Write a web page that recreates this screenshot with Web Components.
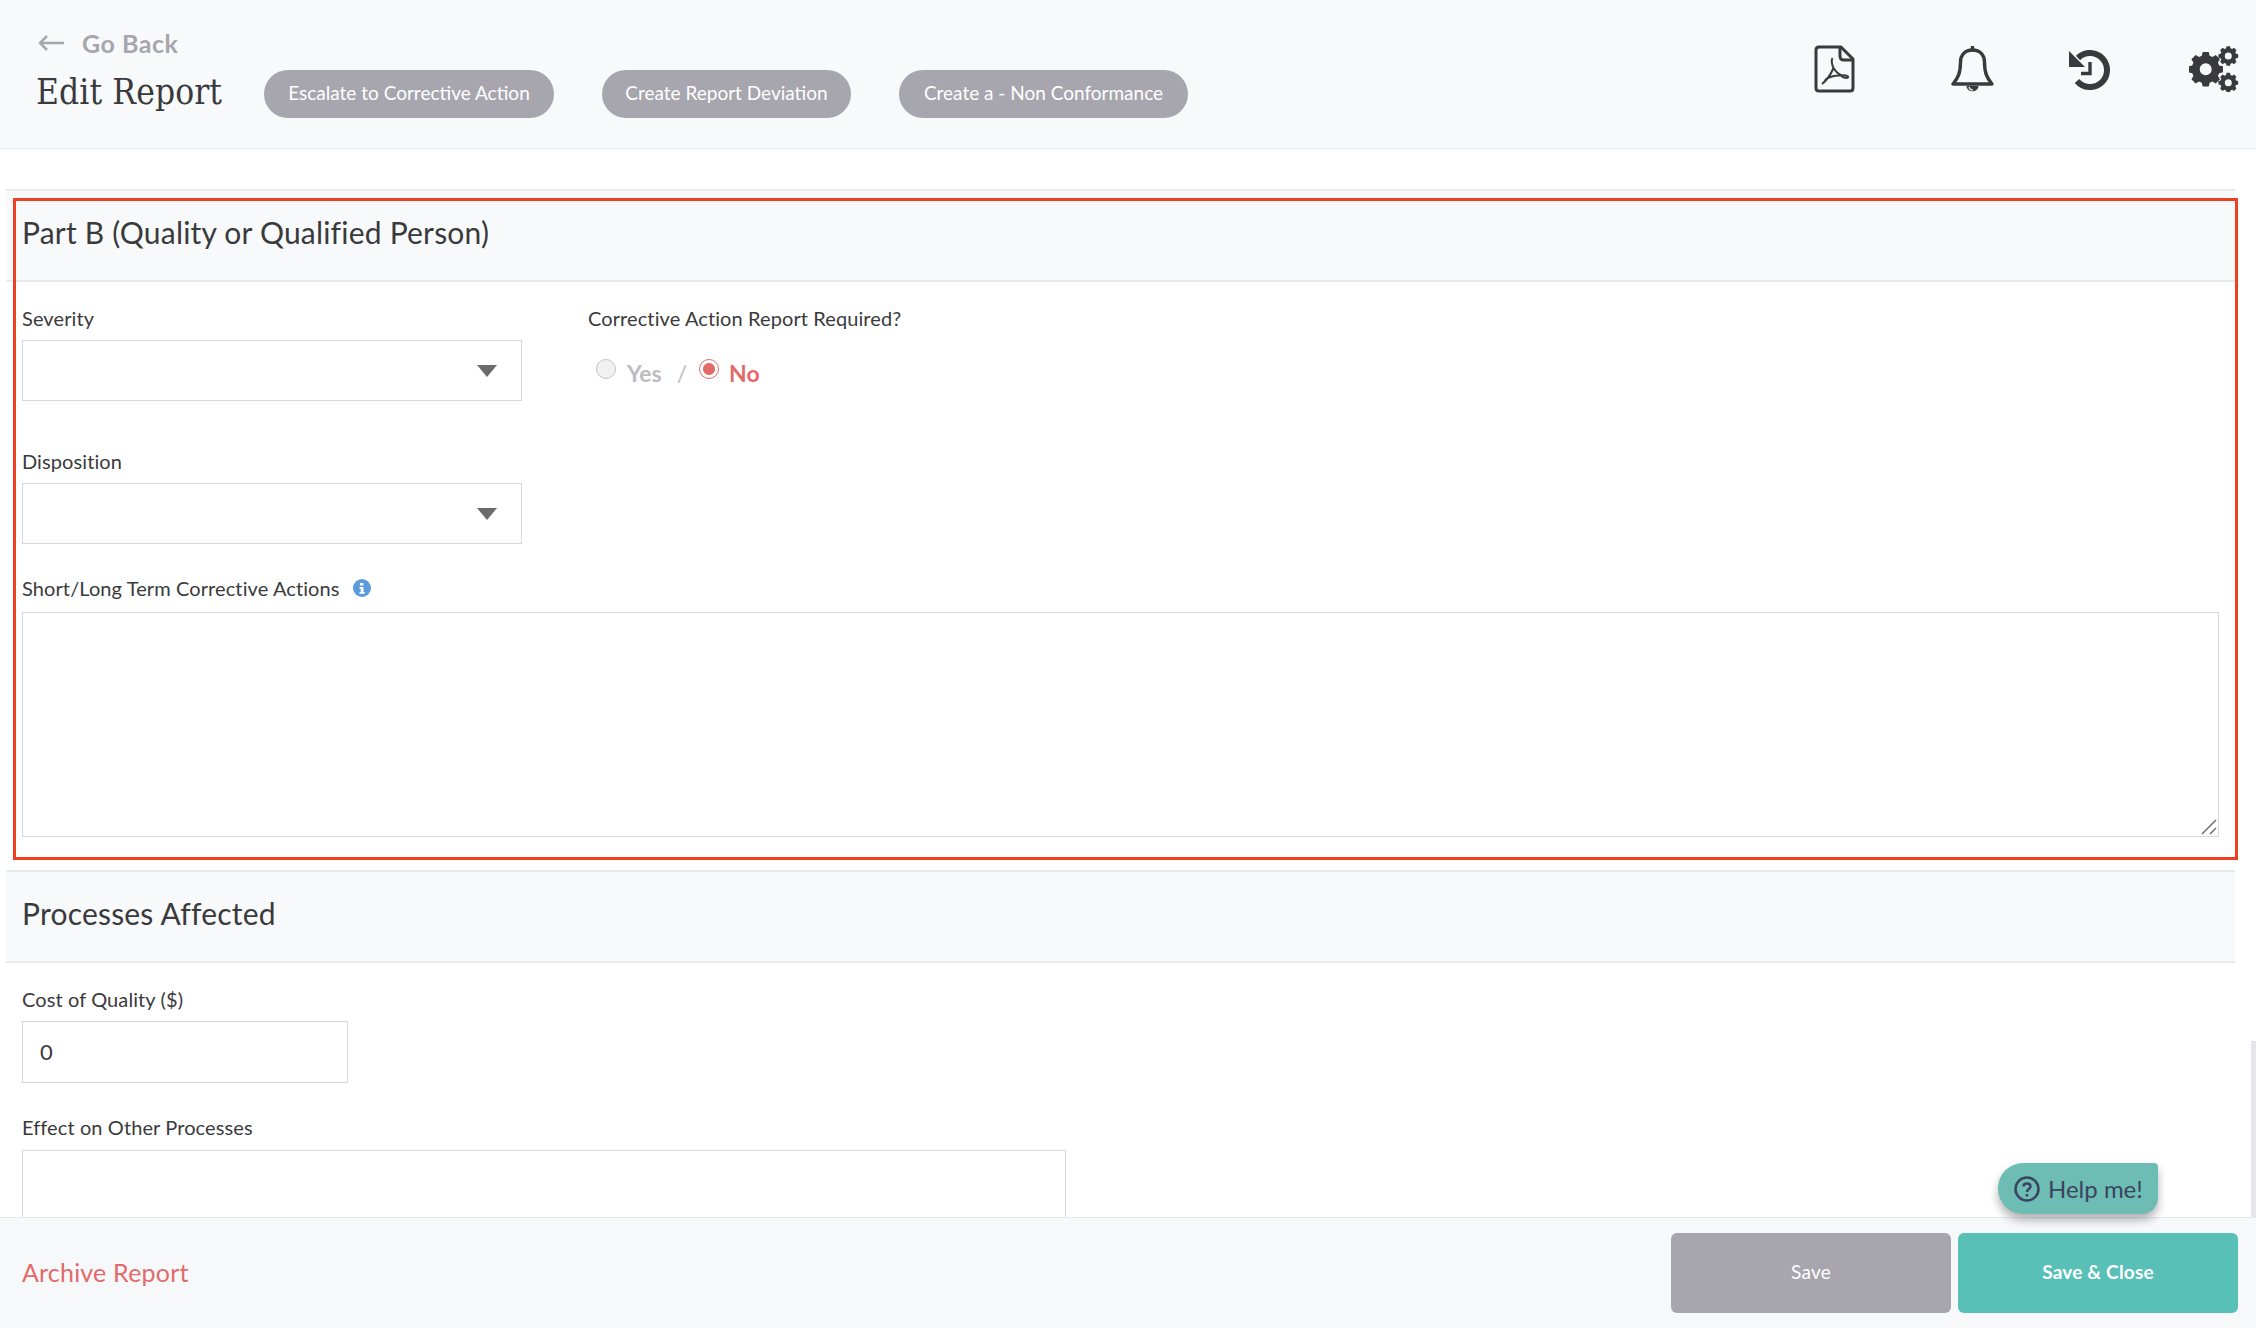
<!DOCTYPE html>
<html>
<head>
<meta charset="utf-8">
<title>Edit Report</title>
<style>
    html, body { margin: 0; height: 100%; }
    body {
        font-family: Lato, "Liberation Sans", sans-serif;
        color: #3a3a3c;
        background: #fff;
        overflow: hidden;
    }
    #app { position: relative; display: flex; flex-direction: column; height: 1328px; }
</style>
</head>
<body>
<div id="app">
    <report-header>
        <pill-button style="width:290px">Escalate to Corrective Action</pill-button>
        <pill-button style="width:249px">Create Report Deviation</pill-button>
        <pill-button style="width:289px">Create a - Non Conformance</pill-button>
        <header-icon slot="icons" name="pdf"></header-icon>
        <header-icon slot="icons" name="bell" style="margin-left:96px"></header-icon>
        <header-icon slot="icons" name="history" style="margin-left:75px"></header-icon>
        <header-icon slot="icons" name="cogs" style="margin-left:79px"></header-icon>
    </report-header>
    <scroll-area>
        <form-section title="Part B (Quality or Qualified Person)">
            <div style="display:flex; gap:66px; margin-top:25px">
                <form-field label="Severity" style="width:500px"><select-box></select-box></form-field>
                <form-field label="Corrective Action Report Required?"><radio-pair></radio-pair></form-field>
            </div>
            <form-field label="Disposition" style="width:500px; margin-top:49px"><select-box></select-box></form-field>
            <form-field label="Short/Long Term Corrective Actions" info style="margin-top:33px">
                <text-box resizable style="height:223px; margin-top:11px"></text-box>
            </form-field>
        </form-section>
        <form-section title="Processes Affected" style="margin-top:33px">
            <form-field label="Cost of Quality ($)" style="width:326px; margin-top:25px"><text-box value="0" style="height:58px; padding-bottom:2px"></text-box></form-field>
            <form-field label="Effect on Other Processes" style="width:1044px; margin-top:33px"><text-box style="height:120px; margin-top:10px"></text-box></form-field>
        </form-section>
    </scroll-area>
    <report-footer>
        <action-button>Save</action-button>
        <action-button primary>Save &amp; Close</action-button>
    </report-footer>
    <help-tab>Help me!</help-tab>
    <red-mark></red-mark>
</div>

<script>
// gear outline with a round hole, used for the three cogs of the settings icon
function cogPath(cx, cy, outer, inner, hole, teeth) {
    const step = Math.PI * 2 / teeth;
    let d = '';
    for (let i = 0; i < teeth; i++) {
        const a = i * step - Math.PI / 2;
        const pts = [
            [inner, a - step * .36],
            [outer, a - step * .22],
            [outer, a + step * .22],
            [inner, a + step * .36]
        ];
        pts.forEach(([r, t], n) => {
            d += `${i === 0 && n === 0 ? 'M' : 'L'}${(cx + r * Math.cos(t)).toFixed(2)} ${(cy + r * Math.sin(t)).toFixed(2)}`;
        });
    }
    d += `Z M${cx - hole} ${cy}a${hole} ${hole} 0 1 0 ${hole * 2} 0a${hole} ${hole} 0 1 0 ${-hole * 2} 0Z`;
    return d;
}

const ICONS = {
    pdf: `<svg width="41" height="48" viewBox="0 0 41 48" fill="none" stroke="#3a3a3c">
        <path d="M27 2H5Q2 2 2 5V43Q2 46 5 46H36Q39 46 39 43V14Z" stroke-width="3" stroke-linejoin="round"/>
        <path d="M26 2V11Q26 15 30 15H39" stroke-width="3"/>
        <path d="M18.500 13C17 15 18 20 19.500 23C17 29 13 35 8 39M19.500 23C22 27 25 29.500 28 30.500C31 30 35 31 34 32.500C32 34 28 32 27 30.500C21 30 14 32 11 35" stroke-width="2"/>
    </svg>`,
    bell: `<svg width="43" height="47" viewBox="0 0 43 47" fill="none" stroke="#3a3a3c" stroke-width="3.400">
        <path d="M21.500 4C14 4 9.500 9 9.500 16C9.500 27 7 32 2 38H41C36 32 33.500 27 33.500 16C33.500 9 29 4 21.500 4Z" stroke-linejoin="round"/>
        <path d="M21.500 1V4" stroke-linecap="round"/>
        <path d="M15.500 40C16 47 27 47 27.500 40Z" fill="#3a3a3c" stroke="none"/>
        <path d="M18 41C18.500 43 20 44 22 44" stroke="#f8f9fb" stroke-width="1.200"/>
    </svg>`,
    history: `<svg width="41" height="41" viewBox="0 0 41 41" fill="none" stroke="#3a3a3c">
        <path d="M9 9A17 17 0 1 1 8 32" stroke-width="6"/>
        <path d="M0 2L0 18H16Z" fill="#3a3a3c" stroke="none"/>
        <path d="M21 13V24.500H12" stroke-width="3.400"/>
    </svg>`,
    cogs: `<svg width="50" height="46" viewBox="0 0 50 46" fill="#3a3a3c">
        <path fill-rule="evenodd" d="${cogPath(16.7, 23.3, 17.5, 14, 6, 8)}"/>
        <path fill-rule="evenodd" d="${cogPath(39.3, 10, 10, 8, 3.5, 8)}"/>
        <path fill-rule="evenodd" d="${cogPath(39.3, 36.7, 10, 8, 3.5, 8)}"/>
    </svg>`
};

class ReportHeader extends HTMLElement {
    constructor() {
        super();
        this.attachShadow({ mode: 'open' });
        this.shadowRoot.innerHTML = `
            <style>
                :host {
                    display: flex;
                    justify-content: space-between;
                    box-sizing: border-box;
                    height: 149px;
                    flex: none;
                    background: #f8f9fb;
                    border-bottom: 1px solid #e9eaed;
                    padding: 30px 17px 0 36px;
                }
                .back {
                    display: flex;
                    align-items: center;
                    gap: 18px;
                    height: 26px;
                    padding-left: 2px;
                    font-size: 25px;
                    letter-spacing: .5px;
                    font-weight: 700;
                    color: #a7a6ae;
                }
                h1 {
                    width: 188px;
                    margin: -4px 0 0;
                    font: 400 35px/44px "DejaVu Serif Condensed", "DejaVu Serif", serif;
                    letter-spacing: .1px;
                    color: #3a3a3c;
                    white-space: nowrap;
                }
                .title-row { display: flex; align-items: center; gap: 40px; margin-top: 14px; }
                .pills { display: flex; gap: 48px; }
                .icons { display: flex; align-items: center; height: 78px; }
            </style>
            <div>
                <div class="back">
                    <svg width="26" height="16" viewBox="0 0 26 16" fill="none" stroke="#a7a6ae" stroke-width="2.500"><path d="M26 8H2M9 1L2 8L9 15"/></svg>
                    Go Back
                </div>
                <div class="title-row">
                    <h1>Edit Report</h1>
                    <div class="pills"><slot></slot></div>
                </div>
            </div>
            <div class="icons"><slot name="icons"></slot></div>
        `;
    }
}

class PillButton extends HTMLElement {
    constructor() {
        super();
        this.attachShadow({ mode: 'open' });
        this.shadowRoot.innerHTML = `
            <style>
                :host {
                    display: flex;
                    align-items: center;
                    justify-content: center;
                    box-sizing: border-box;
                    height: 48px;
                    padding-bottom: 4px;
                    border-radius: 24px;
                    background: #a7a6ae;
                    color: #fff;
                    font-size: 19px;
                    white-space: nowrap;
                }
            </style>
            <slot></slot>
        `;
    }
}

class HeaderIcon extends HTMLElement {
    constructor() {
        super();
        this.attachShadow({ mode: 'open' });
        this.shadowRoot.innerHTML = `
            <style>:host { display: flex; align-items: center; }</style>
            ${ICONS[this.getAttribute('name')] || ''}
        `;
    }
}

class ScrollArea extends HTMLElement {
    constructor() {
        super();
        this.attachShadow({ mode: 'open' });
        this.shadowRoot.innerHTML = `
            <style>
                :host {
                    display: block;
                    position: relative;
                    flex: 1;
                    min-height: 0;
                    overflow: hidden;
                    padding: 40px 21px 0 6px;
                }
                .thumb {
                    position: absolute;
                    right: 0;
                    bottom: 0;
                    width: 5px;
                    height: 176px;
                    background: #e6e6ea;
                }
            </style>
            <slot></slot>
            <div class="thumb"></div>
        `;
    }
}

class FormSection extends HTMLElement {
    constructor() {
        super();
        this.attachShadow({ mode: 'open' });
        this.shadowRoot.innerHTML = `
            <style>
                :host { display: block; }
                h2 {
                    margin: 0;
                    height: 82px;
                    padding: 0 0 7px 16px;
                    display: flex;
                    align-items: center;
                    background: #f8f9fb;
                    border: solid #e9eaed;
                    border-width: 2px 0;
                    font-size: 30px;
                    letter-spacing: .2px;
                    font-weight: 400;
                    color: #3a3a3c;
                }
                .body { padding: 0 16px; }
            </style>
            <h2>${this.getAttribute('title') || ''}</h2>
            <div class="body"><slot></slot></div>
        `;
        this.removeAttribute('title');
    }
}

class FormField extends HTMLElement {
    constructor() {
        super();
        this.attachShadow({ mode: 'open' });
        const info = this.hasAttribute('info') ? `
            <svg width="18" height="18" viewBox="0 0 18 18"><circle cx="9" cy="9" r="9" fill="#5b9bdc"/><path d="M7 4h3.500v2.500H7zM6.500 8h4v5h1.200v1.800H6.500V13h1.200V9.800H6.500z" fill="#fff"/></svg>` : '';
        this.shadowRoot.innerHTML = `
            <style>
                :host { display: block; }
                label {
                    display: flex;
                    align-items: center;
                    gap: 13px;
                    box-sizing: border-box;
                    height: 24px;
                    padding-bottom: 3px;
                    margin-bottom: 9px;
                    font-size: 20px;
                    letter-spacing: .1px;
                    color: #3a3a3c;
                }
            </style>
            <label>${this.getAttribute('label') || ''}${info}</label>
            <slot></slot>
        `;
    }
}

class SelectBox extends HTMLElement {
    constructor() {
        super();
        this.attachShadow({ mode: 'open' });
        this.shadowRoot.innerHTML = `
            <style>
                :host {
                    display: flex;
                    align-items: center;
                    justify-content: flex-end;
                    box-sizing: border-box;
                    height: 61px;
                    padding-right: 24px;
                    border: 1px solid #d8d8d8;
                    background: #fff;
                }
                i {
                    border: solid transparent;
                    border-width: 12px 10.500px 0;
                    border-top-color: #6b6b6b;
                }
            </style>
            <i></i>
        `;
    }
}

class RadioPair extends HTMLElement {
    constructor() {
        super();
        this.attachShadow({ mode: 'open' });
        this.shadowRoot.innerHTML = `
            <style>
                :host {
                    display: flex;
                    align-items: center;
                    box-sizing: border-box;
                    height: 61px;
                    padding: 5px 0 0 8px;
                    font-size: 23px;
                    font-weight: 700;
                    color: #bdbdc1;
                }
                .dot {
                    box-sizing: border-box;
                    width: 20px;
                    height: 20px;
                    margin-top: -8px;
                    border-radius: 50%;
                    border: 1px solid #c4c4c4;
                    background: #f1f1f1;
                }
                .on {
                    border-color: #e26a6a;
                    background: radial-gradient(circle, #e26a6a 0 5.500px, #fff 6.500px);
                }
                .sep { margin: 0 12px 0 15px; font-weight: 400; }
                .no { color: #e26a6a; margin-left: 10px; }
                .yes { margin-left: 11px; }
            </style>
            <span class="dot"></span><span class="yes">Yes</span>
            <span class="sep">/</span>
            <span class="dot on"></span><span class="no">No</span>
        `;
    }
}

class TextBox extends HTMLElement {
    constructor() {
        super();
        this.attachShadow({ mode: 'open' });
        const grip = this.hasAttribute('resizable') ? `
            <svg class="grip" width="16" height="16" viewBox="0 0 16 16" stroke="#6f6f6f" stroke-width="1.500"><path d="M1 15L15 1M9 15L15 9"/></svg>` : '';
        this.shadowRoot.innerHTML = `
            <style>
                :host {
                    display: flex;
                    align-items: center;
                    position: relative;
                    box-sizing: content-box;
                    padding-left: 17px;
                    border: 1px solid #d8d8d8;
                    background: #fff;
                    font-size: 22px;
                    color: #3a3a3c;
                }
                .grip { position: absolute; right: 1px; bottom: 1px; }
            </style>
            ${this.getAttribute('value') || ''}${grip}
        `;
    }
}

class ReportFooter extends HTMLElement {
    constructor() {
        super();
        this.attachShadow({ mode: 'open' });
        this.shadowRoot.innerHTML = `
            <style>
                :host {
                    display: flex;
                    align-items: center;
                    justify-content: space-between;
                    position: relative;
                    box-sizing: border-box;
                    height: 111px;
                    flex: none;
                    padding: 0 18px 0 22px;
                    background: #f7f8fa;
                    border-top: 1px solid #e6e7ea;
                }
                .archive { font-size: 25px; letter-spacing: .2px; color: #e26a6a; margin-top: -2px; }
                .buttons { display: flex; gap: 7px; }
            </style>
            <span class="archive">Archive Report</span>
            <div class="buttons"><slot></slot></div>
        `;
    }
}

class ActionButton extends HTMLElement {
    constructor() {
        super();
        this.attachShadow({ mode: 'open' });
        const primary = this.hasAttribute('primary');
        this.shadowRoot.innerHTML = `
            <style>
                :host {
                    display: flex;
                    align-items: center;
                    justify-content: center;
                    box-sizing: border-box;
                    width: 280px;
                    height: 80px;
                    padding-bottom: 4px;
                    border-radius: 6px;
                    background: ${primary ? '#58c0b7' : '#a7a6ae'};
                    color: #fff;
                    font-size: 19px;
                    letter-spacing: .2px;
                    font-weight: ${primary ? 700 : 400};
                }
            </style>
            <slot></slot>
        `;
    }
}

class HelpTab extends HTMLElement {
    constructor() {
        super();
        this.attachShadow({ mode: 'open' });
        this.shadowRoot.innerHTML = `
            <style>
                :host {
                    position: absolute;
                    left: 1998px;
                    top: 1163px;
                    display: flex;
                    align-items: center;
                    gap: 8px;
                    box-sizing: border-box;
                    width: 160px;
                    height: 51px;
                    padding-left: 16px;
                    border-radius: 25px 4px 16px 25px;
                    background: #6dbdb4;
                    color: #3a4460;
                    font-size: 24px;
                    box-shadow: 0 6px 10px rgba(0, 0, 0, .3);
                }
            </style>
            <svg width="26" height="26" viewBox="0 0 26 26" fill="none" stroke="#3a4460" stroke-width="2.500">
                <circle cx="13" cy="13" r="11.500"/>
                <path d="M9.500 10.500C9.500 6.500 16.500 6.500 16.500 10.500C16.500 13 13 13 13 16"/>
                <path d="M13 18V20.500"/>
            </svg>
            <slot></slot>
        `;
    }
}

class RedMark extends HTMLElement {
    constructor() {
        super();
        this.attachShadow({ mode: 'open' });
        this.shadowRoot.innerHTML = `
            <style>
                :host {
                    position: absolute;
                    left: 13px;
                    top: 198px;
                    box-sizing: border-box;
                    width: 2225px;
                    height: 662px;
                    border: 3px solid #ee4023;
                    pointer-events: none;
                }
            </style>
        `;
    }
}

customElements.define('report-header', ReportHeader);
customElements.define('pill-button', PillButton);
customElements.define('header-icon', HeaderIcon);
customElements.define('scroll-area', ScrollArea);
customElements.define('form-section', FormSection);
customElements.define('form-field', FormField);
customElements.define('select-box', SelectBox);
customElements.define('radio-pair', RadioPair);
customElements.define('text-box', TextBox);
customElements.define('report-footer', ReportFooter);
customElements.define('action-button', ActionButton);
customElements.define('help-tab', HelpTab);
customElements.define('red-mark', RedMark);
</script>
</body>
</html>
